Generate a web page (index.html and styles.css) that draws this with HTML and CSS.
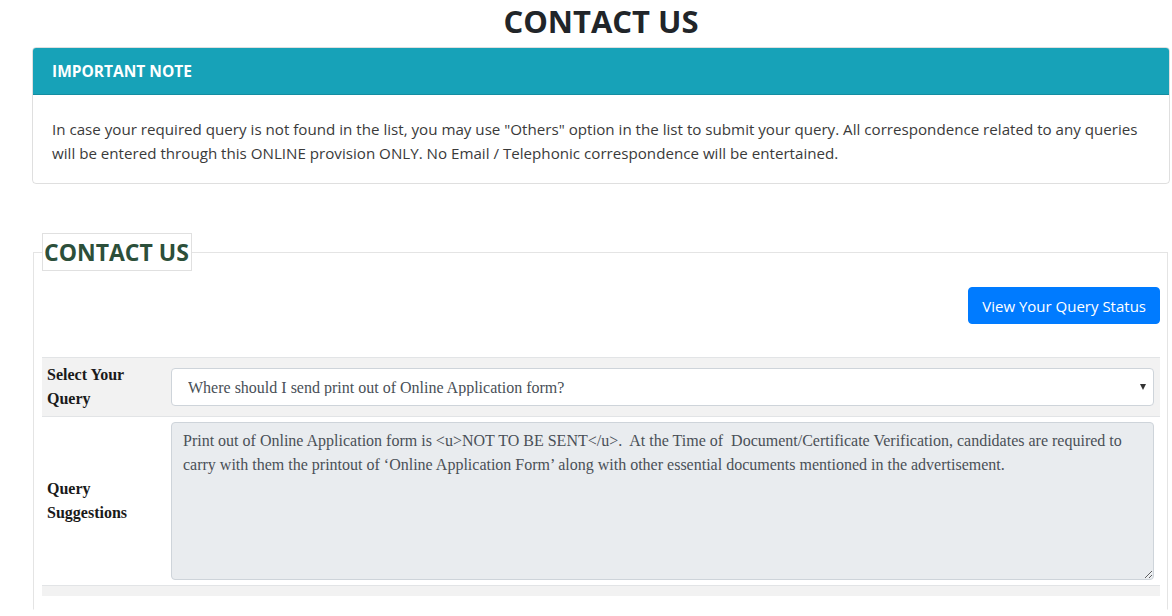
FILE: index.html
```html
<!DOCTYPE html>
<html lang="en">
<head>
<meta charset="utf-8">
<title>Contact Us</title>
<link rel="stylesheet" href="styles.css">
</head>
<body>
<h1 class="page-title">CONTACT US</h1>
<div class="wrap">
  <div class="card">
    <div class="card-header">IMPORTANT NOTE</div>
    <div class="card-body">In case your required query is not found in the list, you may use "Others" option in the list to submit your query. All correspondence related to any queries will be entered through this ONLINE provision ONLY. No Email / Telephonic correspondence will be entertained.</div>
  </div>

  <fieldset class="contact-box">
    <legend class="contact-legend">CONTACT US</legend>
    <div class="btn-row">
      <button class="btn-status" type="button">View Your Query Status</button>
    </div>
    <div class="qtable">
      <div class="qrow striped first">
        <div class="qlabel">Select Your Query</div>
        <div class="qvalue">
          <div class="select-wrap">
            <select class="qselect">
              <option>Where should I send print out of Online Application form?</option>
            </select>
            <span class="select-arrow"></span>
          </div>
        </div>
      </div>
      <div class="qrow second">
        <div class="qlabel">Query Suggestions</div>
        <div class="qvalue">
          <textarea class="qtext" readonly>Print out of Online Application form is &lt;u&gt;NOT TO BE SENT&lt;/u&gt;.  At the Time of  Document/Certificate Verification, candidates are required to carry with them the printout of ‘Online Application Form’ along with other essential documents mentioned in the advertisement.</textarea>
        </div>
      </div>
      <div class="qrow striped filler"></div>
    </div>
  </fieldset>
</div>
</body>
</html>
```

FILE: styles.css
```css
html, body {
  margin: 0;
  padding: 0;
  background: #fff;
}
body {
  font-family: "Open Sans", "Noto Sans", sans-serif;
  color: #212529;
}
.page-title {
  margin: 0 0 7px 0;
  padding: 2px 0 0 30px;
  font-size: 31px;
  line-height: 38px;
  font-weight: 700;
  text-align: center;
  color: #212529;
}
.wrap {
  padding: 0 2px 0 32px;
}
.card {
  border: 1px solid rgba(0,0,0,.125);
  border-radius: 4px;
  overflow: hidden;
}
.card-header {
  background: #17a2b8;
  color: #fff;
  font-size: 15.5px;
  font-weight: 700;
  line-height: 24px;
  padding: 11px 19px;
  border-bottom: 1px solid rgba(0,0,0,.125);
}
.card-body {
  padding: 22px 19px 18px;
  font-size: 15.15px;
  line-height: 24px;
  color: #3a3a3a;
}
.contact-box {
  margin: 49px 2px 0 1px;
  padding: 0 7px 13px 8px;
  border: 1px solid #e4e4e4;
  border-bottom-color: transparent;
  min-width: 0;
}
.contact-legend {
  padding: 0 2px 0 1px;
  border: 1px solid #e0e0e0;
  font-size: 23px;
  line-height: 36px;
  font-weight: 700;
  color: #2c4f3a;
}
.btn-row {
  display: flex;
  justify-content: flex-end;
  margin-top: 16px;
}
.btn-status {
  font-family: "Open Sans", "Noto Sans", sans-serif;
  font-size: 15px;
  line-height: 24px;
  padding: 6px 13px 5px;
  color: #fff;
  background: #007bff;
  border: 1px solid #007bff;
  border-radius: 4px;
}
.qtable {
  margin-top: 33px;
}
.qrow {
  display: grid;
  grid-template-columns: 124px 1fr;
  border-top: 1px solid #e2e4e6;
}
.striped {
  background: #f2f2f2;
}
.qlabel {
  display: flex;
  align-items: center;
  padding: 0 5px;
  font-family: "Liberation Serif", "Times New Roman", serif;
  font-weight: 700;
  font-size: 16px;
  line-height: 24px;
  color: #1a1a1a;
}
.qvalue {
  padding: 10px 6px 10px 5px;
}
.second .qvalue {
  padding: 5px 6px 5px 5px;
}
.filler {
  height: 10px;
}
.select-wrap {
  position: relative;
}
.qselect {
  -webkit-appearance: none;
  appearance: none;
  display: block;
  width: 100%;
  height: 38px;
  box-sizing: border-box;
  padding: 0 30px 0 16px;
  font-family: "Liberation Serif", "Times New Roman", serif;
  font-size: 16px;
  color: #495057;
  background: #fff;
  border: 1px solid #ced4da;
  border-radius: 4px;
}
.select-arrow {
  position: absolute;
  right: 8px;
  top: 16px;
  width: 0;
  height: 0;
  border-left: 3px solid transparent;
  border-right: 3px solid transparent;
  border-top: 6px solid #333;
}
.qtext {
  display: block;
  width: 100%;
  height: 158px;
  box-sizing: border-box;
  margin: 0;
  padding: 6px 11px;
  font-family: "Liberation Serif", "Times New Roman", serif;
  font-size: 16px;
  line-height: 24px;
  color: #495057;
  background: #e9ecef;
  border: 1px solid #ced4da;
  border-radius: 4px;
  resize: vertical;
  overflow: hidden;
}
```
